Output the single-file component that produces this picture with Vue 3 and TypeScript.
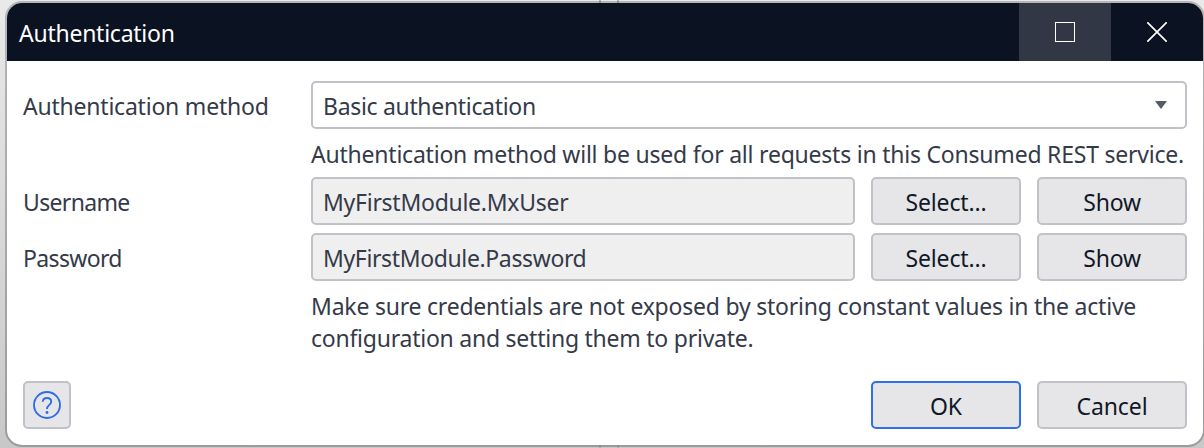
<script setup lang="ts">
interface Row { label: string; value: string; key: string }
const rows: Row[] = [
  { label: 'Username', value: 'MyFirstModule.MxUser', key: 'username' },
  { label: 'Password', value: 'MyFirstModule.Password', key: 'password' },
]
</script>

<template>
  <div class="desktop">
    <div class="seam"></div>
    <div class="dialog">
      <header class="titlebar">
        <h1><span class="t title">Authentication</span></h1>
        <button class="caption maximize" aria-label="Maximize">
          <svg width="20" height="20" viewBox="0 0 20 20"><rect x="0.5" y="0.5" width="19" height="19" fill="none" stroke="#fff" /></svg>
        </button>
        <button class="caption" aria-label="Close">
          <svg width="20" height="20" viewBox="0 0 20 20"><path d="M0.3 0.3 19.7 19.7M19.7 0.3 0.3 19.7" fill="none" stroke="#fff" stroke-width="1.7" /></svg>
        </button>
      </header>
      <main>
        <div class="row">
          <label><span class="t method">Authentication method</span></label>
          <div class="field select">
            <span class="t basic">Basic authentication</span>
            <svg width="12" height="8" viewBox="0 0 12 8"><path d="M0 0H12L6 8Z" fill="#555b66" /></svg>
          </div>
        </div>
        <p class="hint first"><span class="t hint1">Authentication method will be used for all requests in this Consumed REST service.</span></p>
        <div v-for="row in rows" :key="row.key" class="row credential">
          <label><span class="t" :class="row.key">{{ row.label }}</span></label>
          <div class="field readonly"><span class="t" :class="row.key + '-value'">{{ row.value }}</span></div>
          <button class="btn"><span class="t selectlabel">Select...</span></button>
          <button class="btn"><span class="t show">Show</span></button>
        </div>
        <p class="hint second">
          <span class="t hint2">Make sure credentials are not exposed by storing constant values in the active</span><br>
          <span class="t hint3">configuration and setting them to private.</span>
        </p>
        <footer>
          <button class="btn help" aria-label="Help">
            <svg width="28" height="28" viewBox="0 0 28 28" fill="none" stroke="#2f6cec" stroke-width="1.9">
              <circle cx="14" cy="14" r="13" />
              <path d="M9.8 10.8C9.8 8.3 11.4 7 14 7s4.2 1.4 4.2 3.7c0 3.2-4.2 3.2-4.2 7.2" />
              <circle cx="14" cy="21.5" r="1.4" fill="#2f6cec" stroke="none" />
            </svg>
          </button>
          <button class="btn primary"><span class="t ok">OK</span></button>
          <button class="btn"><span class="t cancel">Cancel</span></button>
        </footer>
      </main>
    </div>
  </div>
</template>

<style>
body { margin: 0; overflow: hidden; }
</style>

<style scoped>
* { box-sizing: border-box; }
.desktop {
  position: relative;
  width: 1204px;
  height: 448px;
  padding: 1px 0 0 5px;
  overflow: hidden;
  background: linear-gradient(#e9e9e9, #c8c8c8);
  font: 23px/32px "Noto Sans", sans-serif;
  color: #353a49;
}
.seam {
  position: absolute;
  left: 599px;
  top: 0;
  width: 20px;
  height: 448px;
  border: solid #b4b4b4;
  border-width: 0 2px;
}
.dialog {
  position: relative;
  width: 1200px;
  height: 446px;
  border: 2px solid rgba(0, 0, 0, 0.22);
  border-radius: 17px;
  overflow: hidden;
  background: #fff;
  background-clip: padding-box;
}
.titlebar {
  display: flex;
  height: 58px;
  background: #0b1221;
  color: #fff;
}
h1 { flex: 1; margin: 0; padding: 14px 0 0 12px; font: inherit; }
button { font: inherit; padding: 0; border: 0; }
.caption {
  display: flex;
  width: 92px;
  align-items: center;
  justify-content: center;
  background: transparent;
}
.maximize { background: #323746; }
main { padding: 20px 16px 0; }
.row { display: flex; height: 48px; width: 1164px; }
label { width: 288px; padding-top: 9px; }
.field {
  display: flex;
  align-items: center;
  justify-content: space-between;
  height: 48px;
  padding: 2px 18px 0 10px;
  border: 2px solid #c1c2c7;
  border-radius: 5px;
}
.select { width: 876px; }
.select svg { margin-top: -2px; }
.readonly { width: 544px; background: #efefef; }
.btn {
  display: flex;
  align-items: center;
  justify-content: center;
  width: 150px;
  height: 48px;
  margin-left: 16px;
  padding-top: 2px;
  border: 2px solid #c1c2c7;
  border-radius: 5px;
  background: #e6e6e8;
  color: #111827;
}
.credential + .credential { margin-top: 8px; }
.hint { margin: 0 0 0 288px; white-space: nowrap; }
.first { padding-top: 9px; height: 48px; }
.second { padding-top: 9px; height: 100px; }
footer { display: flex; width: 1164px; }
.help { width: 48px; margin: 0 auto 0 0; padding: 0; }
.primary { border-color: #2f6fed; }
.t { white-space: nowrap; letter-spacing: -0.22px; }
.title { letter-spacing: -0.25px; }
.basic { letter-spacing: -0.32px; }
.username, .password { letter-spacing: -0.65px; }
.username-value { letter-spacing: -0.27px; }
.password-value { letter-spacing: -0.37px; }
.hint3 { letter-spacing: -0.24px; }
.selectlabel { letter-spacing: -0.15px; }
.ok { letter-spacing: 0; }
.cancel { letter-spacing: -0.1px; }
</style>
